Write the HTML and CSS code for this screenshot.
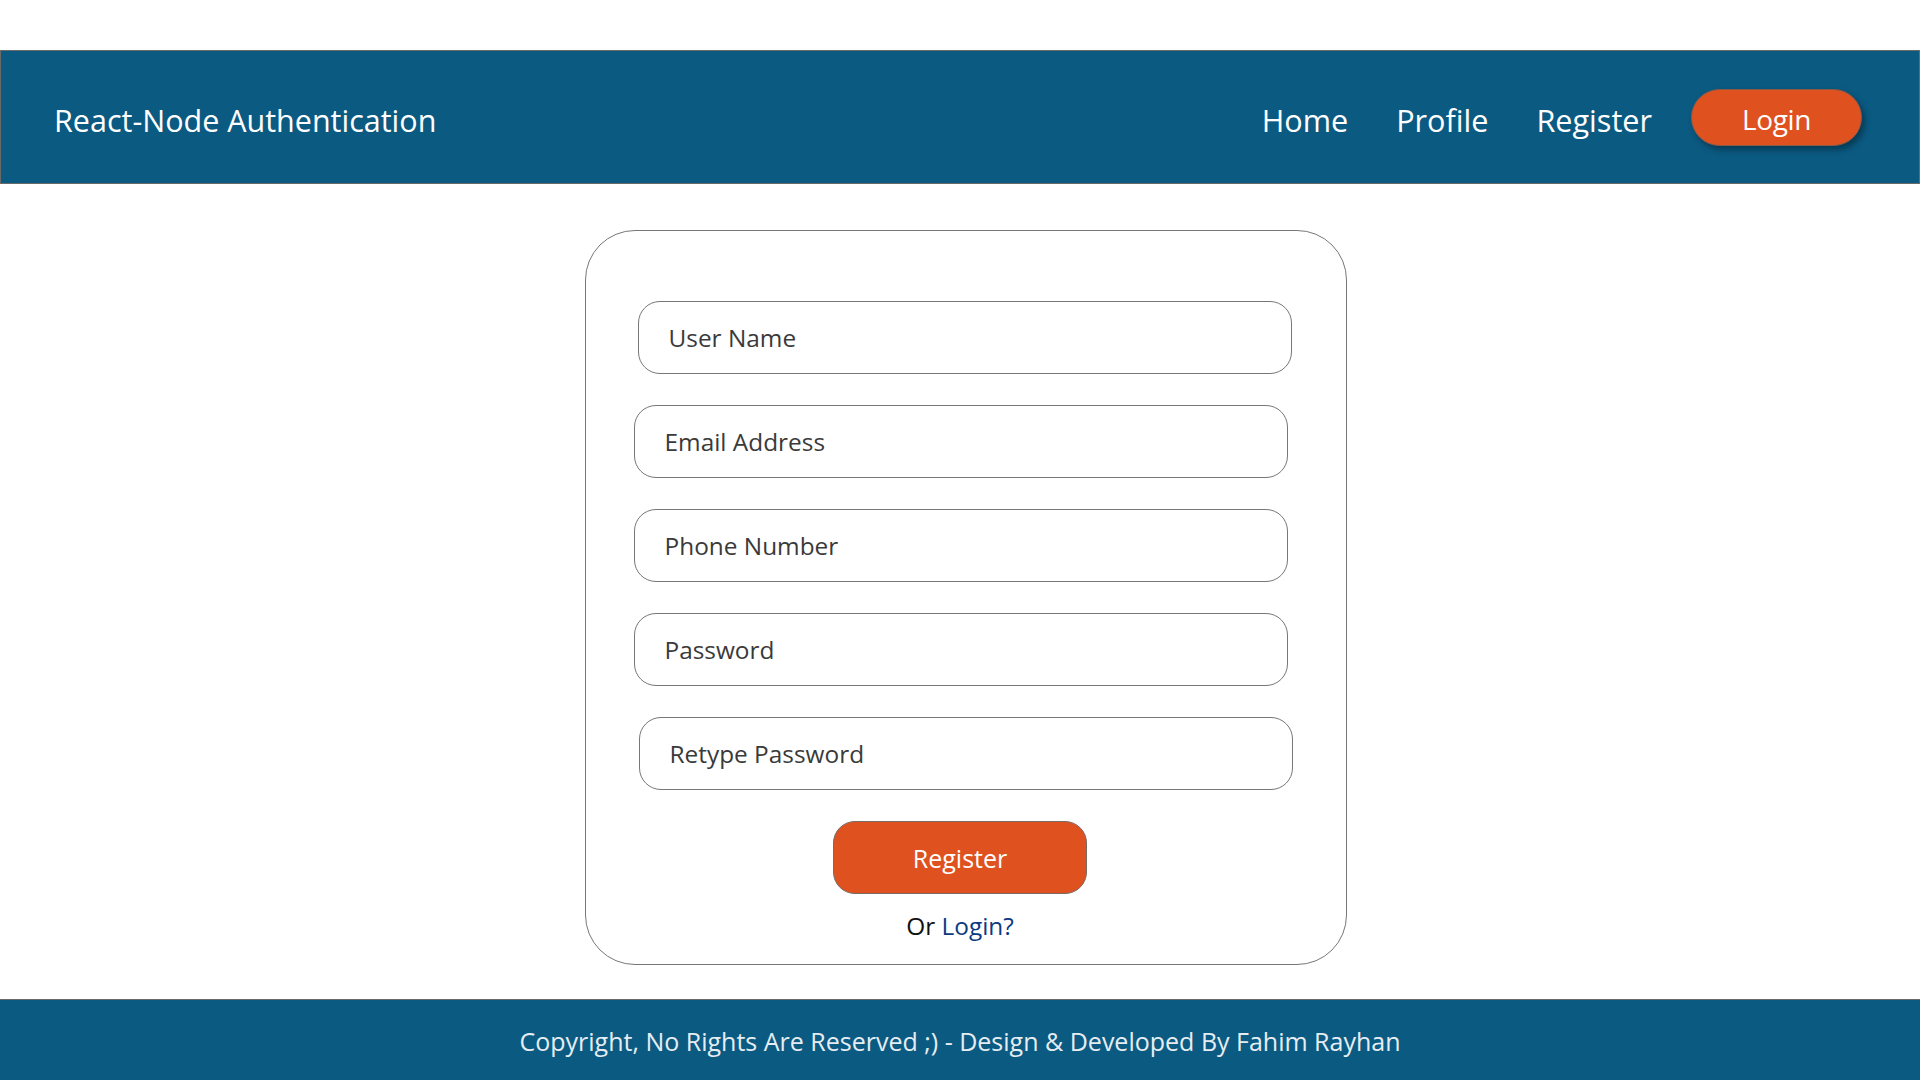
FILE: index.html
```html
<!DOCTYPE html>
<html lang="en">
<head>
<meta charset="utf-8">
<title>React-Node Authentication</title>
<link rel="stylesheet" href="styles.css">
</head>
<body>
<div class="page">
  <header class="navbar">
    <div class="brand">React-Node Authentication</div>
    <nav class="nav">
      <a class="nav-link" href="#">Home</a>
      <a class="nav-link" href="#">Profile</a>
      <a class="nav-link" href="#">Register</a>
      <a class="nav-btn" href="#">Login</a>
    </nav>
  </header>
  <main class="main">
    <form class="card">
      <input class="field f-user" type="text" placeholder="User Name">
      <input class="field f-mid" type="email" placeholder="Email Address">
      <input class="field f-mid" type="text" placeholder="Phone Number">
      <input class="field f-mid" type="password" placeholder="Password">
      <input class="field f-retype" type="password" placeholder="Retype Password">
      <button class="submit" type="button">Register</button>
      <p class="alt">Or <a class="alt-link" href="#">Login?</a></p>
    </form>
  </main>
  <footer class="footer">Copyright, No Rights Are Reserved ;) - Design &amp; Developed By Fahim Rayhan</footer>
</div>
</body>
</html>
```

FILE: styles.css
```css
* { box-sizing: border-box; }
html, body { margin: 0; padding: 0; background: #ffffff; }
body { font-family: "Open Sans", "Noto Sans", sans-serif; color: #111; }

.page { padding-top: 50px; min-height: 1080px; display: flex; flex-direction: column; }

.navbar {
  height: 134px;
  background: #0b5a82;
  border: 1px solid #6a6a6a;
  display: flex;
  align-items: center;
  justify-content: space-between;
  padding: 0 57px 0 53px;
}
.brand { color: #fff; font-size: 30.5px; padding-top: 5px; }
.nav { display: flex; align-items: center; }
.nav-link {
  color: #fff; text-decoration: none; font-size: 30.6px;
  margin-right: 48px; padding-top: 5px;
}
.nav-link:nth-child(3) { margin-right: 39px; }
.nav-btn {
  display: flex; align-items: center; justify-content: center;
  width: 171px; height: 57px; border-radius: 29px;
  background: #e05120; color: #fff; text-decoration: none;
  font-size: 28px; letter-spacing: -0.4px;
  padding-top: 4px;
  border: 1px solid #8a5a48;
  box-shadow: 3px 4px 6px rgba(0,0,0,0.35);
}

.main { display: flex; justify-content: center; padding-left: 11px; margin-top: 46px; }
.card {
  width: 762px; height: 735px;
  border: 1px solid #777;
  border-radius: 50px;
  display: flex; flex-direction: column; align-items: flex-start;
  padding: 70px 0 0 0;
  margin: 0;
}
.field {
  width: 654px; height: 73px;
  border: 1px solid #777;
  border-radius: 22px;
  padding: 0 0 0 30px;
  font-family: "Open Sans", "Noto Sans", sans-serif;
  font-size: 24.4px;
  color: #333;
  margin-bottom: 31px;
  background: #fff;
  outline: none;
}
.field::placeholder { color: #3a3a3a; opacity: 1; }
.f-user { margin-left: 52px; }
.f-mid { margin-left: 48px; }
.f-retype { margin-left: 53px; margin-bottom: 31px; }

.submit {
  align-self: center;
  width: 254px; height: 73px;
  margin-left: -11px;
  border: 1px solid #7a6a64;
  border-radius: 22px;
  background: #e05120; color: #fff;
  font-family: "Open Sans", "Noto Sans", sans-serif;
  font-size: 25px;
}
.alt {
  align-self: center; margin: 15px 0 0 -11px;
  font-size: 24.4px; color: #111;
}
.alt-link { color: #0b3a82; text-decoration: none; }

.footer {
  margin-top: 34px;
  flex: 1;
  background: #0b5a82;
  border-top: 1px solid #6a6a6a;
  color: #e6edf2;
  font-size: 25px;
  text-align: center;
  padding-top: 24px;
}
```
